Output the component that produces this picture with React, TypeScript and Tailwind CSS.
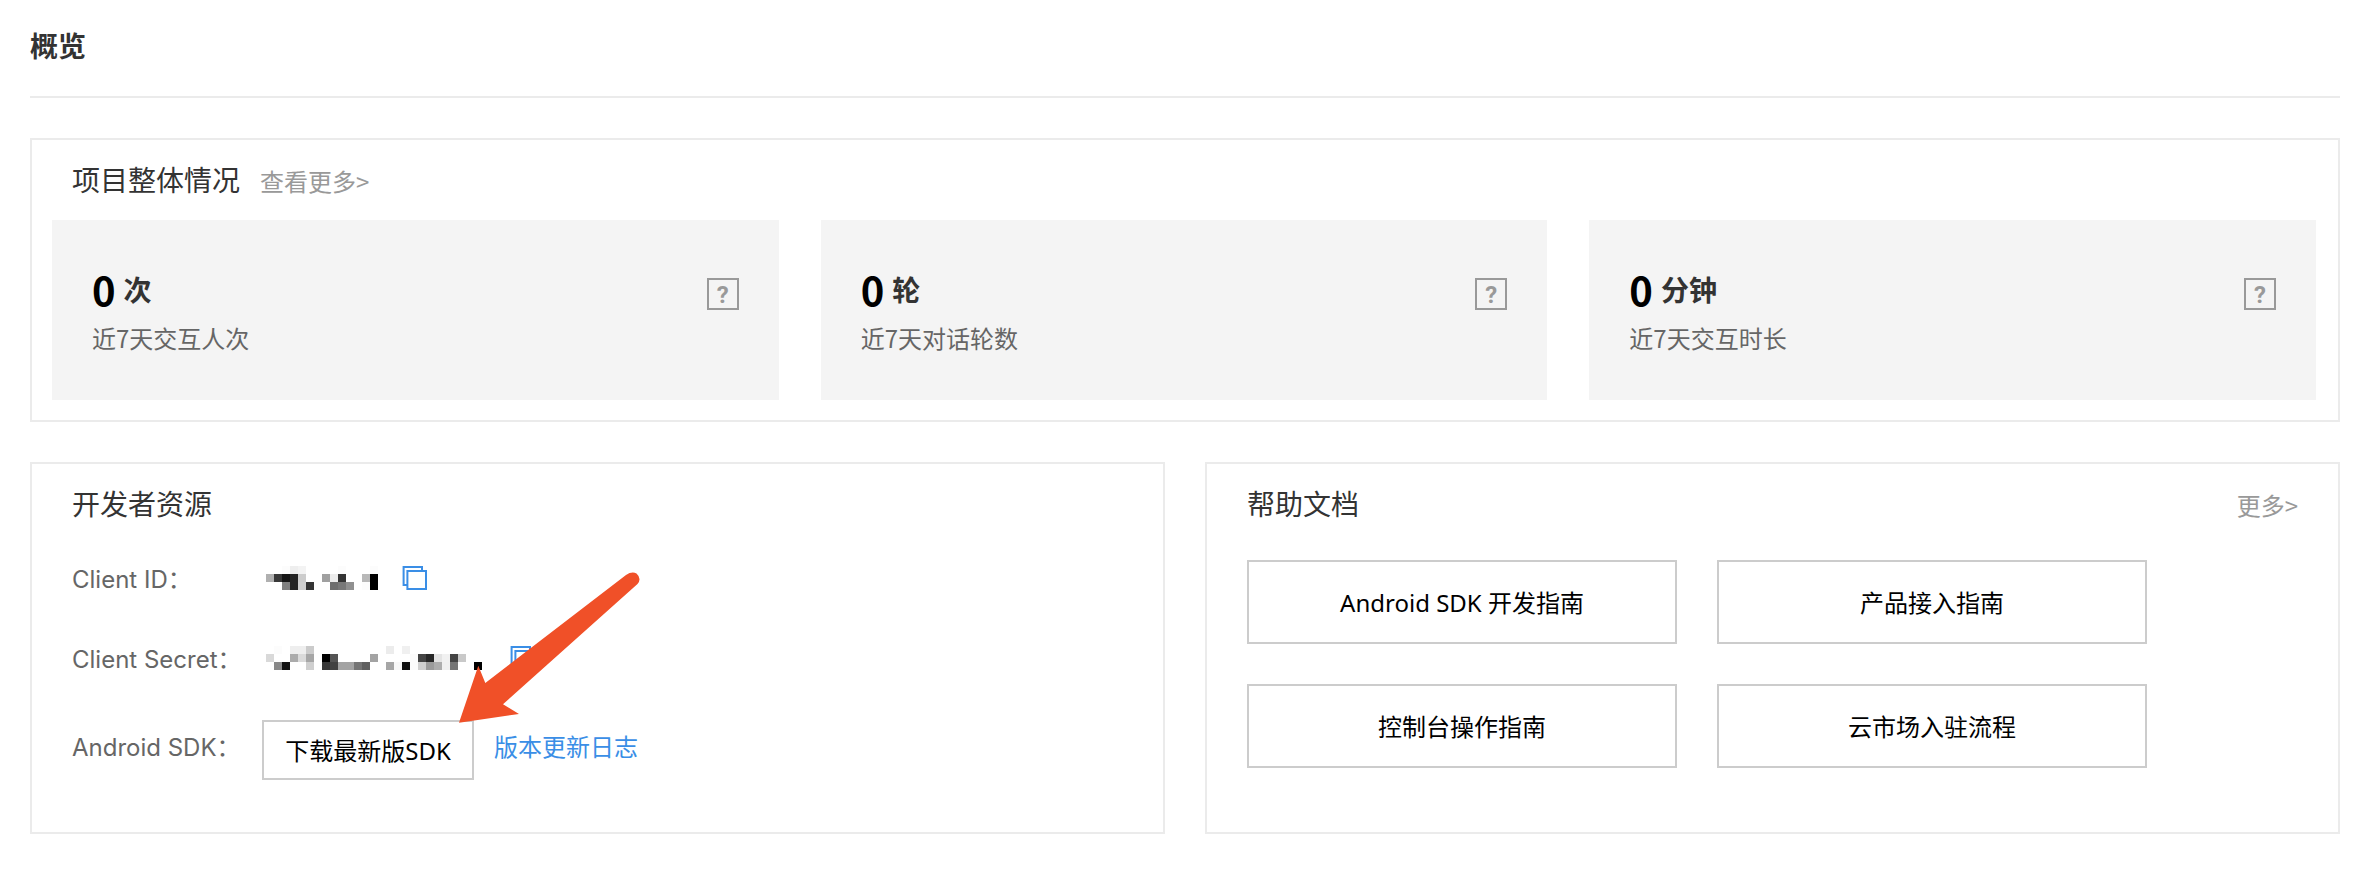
import React from "react";

const stats = [
  { value: "0", unit: "次", label: "近7天交互人次" },
  { value: "0", unit: "轮", label: "近7天对话轮数" },
  { value: "0", unit: "分钟", label: "近7天交互时长" },
];

const docs = ["Android SDK 开发指南", "产品接入指南", "控制台操作指南", "云市场入驻流程"];

type Cell = [column: number, row: number, shade: string];

const CELL = 8;

const idCells: Cell[] = [
  [2, 0, "#fcfcfc"], [3, 0, "#eeeeee"], [4, 0, "#f3f3f3"], [9, 0, "#fcfcfc"], [13, 0, "#fcfcfc"],
  [0, 1, "#b0b0b0"], [1, 1, "#383838"], [2, 1, "#151515"], [3, 1, "#242424"], [4, 1, "#cccccc"],
  [7, 1, "#a0a0a0"], [8, 1, "#ececec"], [9, 1, "#343434"], [12, 1, "#b8b8b8"], [13, 1, "#000000"],
  [2, 2, "#808080"], [3, 2, "#242424"], [4, 2, "#cfcfcf"], [5, 2, "#343434"], [8, 2, "#6e6e6e"],
  [9, 2, "#787878"], [10, 2, "#909090"], [12, 2, "#fcfcfc"], [13, 2, "#000000"],
];

const secretCells: Cell[] = [
  [1, 0, "#fcfcfc"], [3, 0, "#eeeeee"], [4, 0, "#eeeeee"], [5, 0, "#cbcbcb"], [15, 0, "#ececec"], [17, 0, "#f0f0f0"],
  [0, 1, "#d9d9d9"], [3, 1, "#ababab"], [4, 1, "#dadada"], [5, 1, "#a6a6a6"], [7, 1, "#000000"],
  [8, 1, "#545454"], [13, 1, "#a3a3a3"], [18, 1, "#fbfbfb"], [19, 1, "#444444"], [20, 1, "#282828"],
  [21, 1, "#e4e4e4"], [22, 1, "#f1f1f1"], [23, 1, "#444444"], [24, 1, "#c9c9c9"],
  [1, 2, "#888888"], [2, 2, "#111111"], [5, 2, "#cfcfcf"], [7, 2, "#383838"], [8, 2, "#414141"],
  [9, 2, "#a3a3a3"], [10, 2, "#a3a3a3"], [11, 2, "#757575"], [12, 2, "#606060"], [15, 2, "#a6a6a6"],
  [16, 2, "#f8f8f8"], [17, 2, "#111111"], [18, 2, "#fbfbfb"], [19, 2, "#cfcfcf"], [20, 2, "#9b9b9b"],
  [21, 2, "#adadad"], [22, 2, "#f0f0f0"], [23, 2, "#757575"], [26, 2, "#000000"],
];

function Mosaic({ cells, className }: { cells: Cell[]; className: string }) {
  return (
    <svg className={className} aria-hidden="true" shapeRendering="crispEdges">
      {cells.map(([column, row, shade]) => (
        <rect key={`${column}-${row}`} x={column * CELL} y={row * CELL} width={CELL} height={CELL} fill={shade} />
      ))}
    </svg>
  );
}

function CopyButton({ label }: { label: string }) {
  return (
    <button type="button" aria-label={label} className="block">
      <svg width="26" height="24" viewBox="0 0 26 24" fill="none" stroke="#3a8ee6" strokeWidth="2" aria-hidden="true">
        <path d="M5 19H1.6V1H20V5" />
        <rect x="5.4" y="5" width="18.6" height="18" />
      </svg>
    </button>
  );
}

function StatCard({ value, unit, label }: { value: string; unit: string; label: string }) {
  return (
    <div className="flex flex-1 items-start justify-between bg-[#f4f4f4] px-10 pt-[45px] pb-[42px]">
      <div>
        <div className="flex h-12 items-center gap-2 leading-[48px]">
          <span className="text-[40px] font-bold text-black">{value}</span>
          <span className="text-[28px] font-bold text-[#333]">{unit}</span>
        </div>
        <div className="mt-[5px] text-2xl leading-10 text-[#666]">{label}</div>
      </div>
      <button
        type="button"
        aria-label={`${label}说明`}
        className="mt-[13px] flex size-8 items-center justify-center border-2 border-[#999] pt-[2px] font-[Roboto,sans-serif] text-2xl font-bold text-[#999]"
      >
        ?
      </button>
    </div>
  );
}

function Arrow() {
  return (
    <svg
      className="pointer-events-none absolute top-[108px] left-[427px] h-[152px] w-[184px]"
      viewBox="0 0 184 152"
      aria-hidden="true"
    >
      <path
        d="M0 150.7 L19.3 93.7 L26.3 111 L167 3 Q173 -1 177.500 1.500 Q183 6.500 178.500 12 L44 132.300 L60 142 Z"
        fill="#f05028"
      />
    </svg>
  );
}

export default function App() {
  return (
    <main className="bg-white pr-[34px] pl-[30px] pb-[38px] font-['Noto_Sans_CJK_SC',sans-serif] text-[#333]">
      <header className="border-b-2 border-[#ebebeb] pt-[25px] pb-[31px]">
        <h1 className="text-[28px] leading-10 font-bold">概览</h1>
      </header>

      <section className="mt-10 border-2 border-[#ebebeb] pt-[19px] pr-[22px] pb-5 pl-5">
        <div className="flex h-10 items-baseline gap-5 pl-5 leading-10">
          <h2 className="text-[28px]">项目整体情况</h2>
          <a href="#stats" className="text-2xl leading-10 text-[#999]">查看更多&gt;</a>
        </div>
        <div className="mt-[21px] flex gap-[42px]">
          {stats.map((stat) => (
            <StatCard key={stat.label} {...stat} />
          ))}
        </div>
      </section>

      <div className="mt-10 grid grid-cols-2 gap-10">
        <section className="relative border-2 border-[#ebebeb] px-10 pt-[19px] pb-[52px]">
          <h2 className="text-[28px] leading-10">开发者资源</h2>
          <dl className="mt-[37px] grid grid-cols-[190px_1fr] gap-y-10 text-2xl leading-10">
            <dt className="font-[Inter,'Noto_Sans_CJK_SC',sans-serif] whitespace-nowrap text-[#666]">Client ID：</dt>
            <dd className="flex items-center gap-6 pb-1 pl-1">
              <Mosaic cells={idCells} className="h-6 w-28" />
              <CopyButton label="复制 Client ID" />
            </dd>
            <dt className="font-[Inter,'Noto_Sans_CJK_SC',sans-serif] whitespace-nowrap text-[#666]">Client Secret：</dt>
            <dd className="flex items-center gap-6 pb-1 pl-1">
              <Mosaic cells={secretCells} className="h-6 w-[220px]" />
              <CopyButton label="复制 Client Secret" />
            </dd>
            <dt className="pt-2 font-[Inter,'Noto_Sans_CJK_SC',sans-serif] whitespace-nowrap text-[#666]">Android SDK：</dt>
            <dd className="flex items-start gap-5">
              <button
                type="button"
                className="h-[60px] w-[212px] border-2 border-[#ccc] pt-[2px] font-['Noto_Sans','Noto_Sans_CJK_SC',sans-serif] whitespace-nowrap text-black"
              >
                下载最新版SDK
              </button>
              <a href="#changelog" className="pt-[6px] text-[#3a8ee6]">版本更新日志</a>
            </dd>
          </dl>
          <Arrow />
        </section>

        <section className="border-2 border-[#ebebeb] px-10 pt-[19px] pb-[52px]">
          <div className="flex h-10 items-baseline justify-between leading-10">
            <h2 className="text-[28px]">帮助文档</h2>
            <a href="#docs" className="text-2xl leading-10 text-[#999]">更多&gt;</a>
          </div>
          <div className="mt-[37px] grid grid-cols-[430px_430px] gap-10">
            {docs.map((doc) => (
              <button
                key={doc}
                type="button"
                className="h-[84px] border-2 border-[#ccc] pt-[2px] font-['Noto_Sans','Noto_Sans_CJK_SC',sans-serif] text-2xl text-black"
              >
                {doc}
              </button>
            ))}
          </div>
        </section>
      </div>
    </main>
  );
}
